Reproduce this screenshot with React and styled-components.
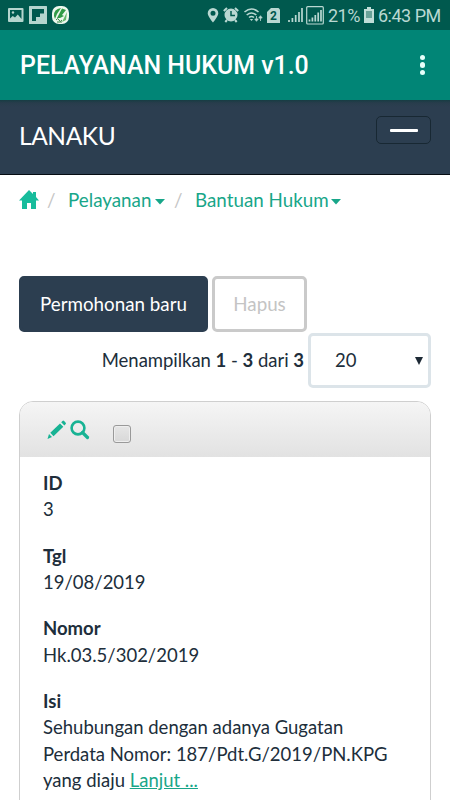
import React from "react";
import styled, { createGlobalStyle } from "styled-components";

const App = () => {
  return (
    <>
      <GlobalStyle />
      <Screen>
        <StatusBar>
          <Notifications>
            <PictureIcon />
            <FlipIcon />
            <LeafIcon />
          </Notifications>
          <SystemIcons>
            <PinIcon />
            <AlarmIcon />
            <WifiIcon />
            <SimIcon />
            <SignalIcons />
            <StatusText $width="32px">21%</StatusText>
            <BatteryIcon />
            <StatusText $width="62px">6:43 PM</StatusText>
          </SystemIcons>
        </StatusBar>
        <AppBar>
          <AppTitle>PELAYANAN HUKUM v1.0</AppTitle>
          <MoreButton aria-label="Menu">
            <i />
            <i />
            <i />
          </MoreButton>
        </AppBar>
        <Navbar>
          <Brand>LANAKU</Brand>
          <NavToggle aria-label="Navigation">
            <span />
          </NavToggle>
        </Navbar>
        <Breadcrumb>
          <HomeIcon />
          <Slash $left="8px">/</Slash>
          <Crumb $width="84px">Pelayanan</Crumb>
          <Caret />
          <Slash $left="9px">/</Slash>
          <Crumb $width="133px">Bantuan Hukum</Crumb>
          <Caret />
        </Breadcrumb>
        <Toolbar>
          <Button $primary $width="189px">
            Permohonan baru
          </Button>
          <Button $width="95px">Hapus</Button>
        </Toolbar>
        <Paging>
          <Summary>
            Menampilkan <b>1</b> - <b>3</b> dari <b>3</b>
          </Summary>
          <PageSize>
            20
            <svg width="8" height="8" viewBox="0 0 8 8">
              <path d="M0 0h8L4 8z" fill="#1d2935" />
            </svg>
          </PageSize>
        </Paging>
        <Panel>
          <PanelHead>
            <PencilIcon />
            <SearchIcon />
            <Check />
          </PanelHead>
          <PanelBody>
            <Field>
              <dt>ID</dt>
              <dd>3</dd>
            </Field>
            <Field>
              <dt>Tgl</dt>
              <dd>19/08/2019</dd>
            </Field>
            <Field>
              <dt>Nomor</dt>
              <dd>Hk.03.5/302/2019</dd>
            </Field>
            <Field>
              <dt>Isi</dt>
              <dd>
                Sehubungan dengan adanya Gugatan
                <br />
                Perdata Nomor: 187/Pdt.G/2019/PN.KPG
                <br />
                yang diaju <More>Lanjut ...</More>
              </dd>
            </Field>
          </PanelBody>
        </Panel>
      </Screen>
    </>
  );
};

const PictureIcon = () => (
  <svg width="16" height="14" viewBox="0 0 16 14">
    <rect width="15.5" height="14" rx="1" fill="#b5d5ce" />
    <path d="M2 2h11.5v9L9.8 6.5 7 9.4 4.7 8 2 10.5z" fill="#00594e" />
    <circle cx="5" cy="4.5" r="1.2" fill="#b5d5ce" />
  </svg>
);

const FlipIcon = () => (
  <svg width="18" height="18" viewBox="0 0 18 18">
    <rect width="18" height="18" rx="0.5" fill="#b5d5ce" />
    <path d="M3 3h12v4.5h-4V11H7v4H3z" fill="#00594e" />
  </svg>
);

const LeafIcon = () => (
  <svg width="17" height="18" viewBox="0 0 17 18">
    <rect width="17" height="18" rx="7" fill="#eef8ee" />
    <path d="M2 10Q1.500 3 9 2L5 8 3 13zM10 2.500l4 1.500-4 5 2 1-4 2H5z" fill="#319b46" />
    <path d="M15 6l-1 8-4 2 2-4z" fill="#65b86a" />
    <path d="M4 14q2-3 3 0t3 0M5 16h5" fill="none" stroke="#388847" />
  </svg>
);

const PinIcon = () => (
  <svg width="12" height="16" viewBox="0 0 12 16">
    <path
      d="M6 1a5.300 5.300 0 0 0-5.300 5.300C.7 9.500 6 15.500 6 15.500s5.300-6 5.300-9.200A5.300 5.300 0 0 0 6 1zm0 2.700a2.500 2.500 0 1 1 0 5 2.500 2.500 0 0 1 0-5z"
      fill="#b9d8d2"
      fillRule="evenodd"
    />
  </svg>
);

const AlarmIcon = () => (
  <svg width="16" height="16" viewBox="0 0 16 16">
    <circle cx="8" cy="8" r="6.5" fill="#b9d8d2" />
    <path d="M.8 4L4 1M15.2 4L12 1M4 13l-1.700 2M12 13l1.700 2" stroke="#b9d8d2" strokeWidth="2" />
    <path d="M8 4v4.500h4" fill="none" stroke="#00594e" strokeWidth="1.5" />
  </svg>
);

const WifiIcon = () => (
  <svg width="20" height="16" viewBox="0 0 20 16">
    <g fill="none" stroke="#b9d8d2" strokeWidth="1.6">
      <path d="M1.500 5Q8.500-1 15.500 5M3.700 8q4.800-4 9.600 0M6 10.500q2.500-2 5 0" />
    </g>
    <path d="M6.800 12h3.400l-1.700 2z" fill="#b9d8d2" />
    <path d="M13.500 9v4M11.800 12l1.700 2.300 1.700-2.300zM17.500 14v-4M15.800 11l1.700-2.300 1.700 2.300z" fill="#b9d8d2" stroke="#b9d8d2" strokeWidth="0.8" />
  </svg>
);

const SimIcon = () => (
  <SimSvg width="13" height="15" viewBox="0 0 13 15">
    <path d="M4 0h7.500L13 1.500V15H0V4z" fill="#b9d8d2" />
    <text x="6.5" y="12" textAnchor="middle" fontFamily="Roboto, sans-serif" fontSize="12" fontWeight="700" fill="#00594e">
      2
    </text>
  </SimSvg>
);

const SignalIcons = () => (
  <svg width="36" height="19" viewBox="0 0 36 19">
    <g stroke="#b9d8d2" strokeWidth="1.7">
      <path d="M1 16v-2M4.400 16v-4M7.700 16V9M11 16V6M14 16V2" />
      <path d="M21.500 15.500v-2M24.400 15.500v-4M27.300 15.500V9M30.200 15.500V6.500M33 15.500V4" />
    </g>
    <rect x="18.7" y="0.7" width="16.6" height="17.3" rx="1" fill="none" stroke="#b9d8d2" strokeWidth="1.2" />
  </svg>
);

const BatteryIcon = () => (
  <svg width="10" height="16" viewBox="0 0 10 16">
    <path d="M3 0h4v2h3v14H0V2h3z" fill="#c0ddd7" />
    <path d="M2 4h6v7H2z" fill="#69a298" />
  </svg>
);

const HomeIcon = () => (
  <HomeSvg width="20" height="19" viewBox="0 0 20 19">
    <path d="M10 0l4 4V2h3v5l3 3.500h-3V19h-5v-6H8v6H3v-8.500H0z" fill="#18bc9c" />
  </HomeSvg>
);

const Caret = () => (
  <CaretSvg width="10" height="6" viewBox="0 0 10 6">
    <path d="M0 0h10L5 5.500z" fill="#18a689" />
  </CaretSvg>
);

const PencilIcon = () => (
  <svg width="20" height="20" viewBox="0 0 20 20">
    <path d="M2 14l3 3-4.500 2zM3.300 12.700L13 3.500l3.300 3.300-9.800 9.400zM14.200 2.300l1.300-1.300q.8-.8 1.600 0l1.600 1.700q.6.700 0 1.400l-1.300 1.300z" fill="#18b394" />
  </svg>
);

const SearchIcon = () => (
  <svg width="20" height="20" viewBox="0 0 20 20">
    <circle cx="8" cy="8" r="6.4" fill="none" stroke="#18b394" strokeWidth="2.6" />
    <path d="M12.500 12.500l5 5" stroke="#18b394" strokeWidth="3.2" strokeLinecap="round" />
  </svg>
);

export default App;

const GlobalStyle = createGlobalStyle`
  * {
    box-sizing: border-box;
  }
  body {
    margin: 0;
    overflow: hidden;
    background: #fff;
  }
  svg {
    display: block;
    flex: none;
  }
`;

const Screen = styled.div`
  width: 450px;
  height: 800px;
  overflow: hidden;
  color: #202e3b;
  font-family: Lato, sans-serif;
  font-size: 18.5px;
  line-height: 26.2px;
`;

const StatusBar = styled.header`
  display: flex;
  justify-content: space-between;
  height: 30px;
  padding: 0 10px 0 8px;
  background: #00594e;
`;

const Notifications = styled.div`
  display: flex;
  align-items: center;
  gap: 5px;
`;

const SystemIcons = styled.div`
  display: flex;
  align-items: center;
  gap: 4px;
`;

const StatusText = styled.span`
  width: ${(props) => props.$width};
  padding-top: 2px;
  color: #b9d8d2;
  font-family: Roboto, sans-serif;
  font-size: 18px;
  letter-spacing: -0.5px;
  white-space: nowrap;
`;

const SimSvg = styled.svg`
  margin-right: 4px;
`;

const HomeSvg = styled.svg`
  margin-bottom: 2px;
`;

const CaretSvg = styled.svg`
  margin-top: 3px;
`;

const AppBar = styled.div`
  display: flex;
  align-items: center;
  justify-content: space-between;
  height: 70px;
  padding: 3px 25px 0 20px;
  background: #018576;
`;

const AppTitle = styled.h1`
  margin: 0;
  color: #fff;
  font-family: Roboto, sans-serif;
  font-size: 24.9px;
  font-weight: 500;
  white-space: nowrap;
`;

const MoreButton = styled.button`
  display: flex;
  flex-direction: column;
  gap: 2px;
  padding: 0 0 3px;
  border: 0;
  background: none;

  i {
    width: 5.5px;
    height: 5.5px;
    border-radius: 50%;
    background: #e6fffa;
  }
`;

const Navbar = styled.nav`
  display: flex;
  align-items: flex-start;
  justify-content: space-between;
  height: 75px;
  padding: 16px 19px 0;
  border-bottom: 1px solid #060c12;
  background: linear-gradient(#173c43 0, #283d4c 3px, #2c3e50 7px);
`;

const Brand = styled.a`
  padding-top: 7px;
  color: #fff;
  font-size: 24.5px;
  letter-spacing: -0.4px;
`;

const NavToggle = styled.button`
  display: flex;
  align-items: center;
  justify-content: center;
  width: 55px;
  height: 28px;
  padding: 0;
  border: 1px solid #182833;
  border-radius: 5px;
  background: none;

  span {
    width: 28px;
    height: 3px;
    border-radius: 1px;
    background: #fff;
  }
`;

const Breadcrumb = styled.div`
  display: flex;
  align-items: center;
  height: 50px;
  padding: 1px 19px 0;
  font-size: 18.8px;
`;

const Slash = styled.span`
  width: 8px;
  margin: 0 13px 0 ${(props) => props.$left};
  color: #c5c5c5;
  text-align: center;
`;

const Crumb = styled.a`
  width: ${(props) => props.$width};
  margin-right: 3px;
  color: #18a689;
  white-space: nowrap;
`;

const Toolbar = styled.div`
  display: flex;
  gap: 4px;
  margin-top: 51px;
  padding: 0 19px;
`;

const Button = styled.button`
  width: ${(props) => props.$width};
  height: 56px;
  padding: 0 0 2px;
  border: 3px solid ${(props) => (props.$primary ? "#2c3e50" : "#cacaca")};
  border-radius: 5px;
  background: ${(props) => (props.$primary ? "#2c3e50" : "#fff")};
  color: ${(props) => (props.$primary ? "#fff" : "#c4c4c4")};
  font-family: inherit;
  font-size: 18.8px;
`;

const Paging = styled.div`
  display: flex;
  align-items: center;
  justify-content: flex-end;
  gap: 4px;
  margin-top: 1px;
  padding-right: 19px;
`;

const Summary = styled.span`
  letter-spacing: -0.03px;
  white-space: nowrap;
`;

const PageSize = styled.div`
  display: flex;
  align-items: center;
  justify-content: space-between;
  width: 123px;
  height: 55px;
  padding: 0 5px 0 24px;
  border: 3px solid #dce4e9;
  border-radius: 5px;
`;

const Panel = styled.section`
  height: 440px;
  margin: 13px 19px 0;
  border: 1px solid #cfcfcf;
  border-radius: 14px;
  overflow: hidden;
`;

const PanelHead = styled.div`
  display: flex;
  height: 55px;
  padding: 18px 0 0 27px;
  background: linear-gradient(#f5f5f5, #e2e2e2);

  svg + svg {
    margin-left: 3px;
  }
`;

const Check = styled.span`
  width: 18px;
  height: 18px;
  margin: 5px 0 0 23px;
  border: 1px solid #999;
  border-radius: 3px;
  background: linear-gradient(#e6e6e6, #d8d8d8);
  box-shadow: inset 0 0 0 1px #eee;
`;

const PanelBody = styled.dl`
  margin: 0;
  padding: 13px 23px;
`;

const Field = styled.div`
  margin-bottom: 20.3px;
  white-space: nowrap;

  dt {
    font-weight: 700;
  }

  dd {
    margin: 0;
  }
`;

const More = styled.a`
  color: #18a689;
  text-decoration: underline;
`;
